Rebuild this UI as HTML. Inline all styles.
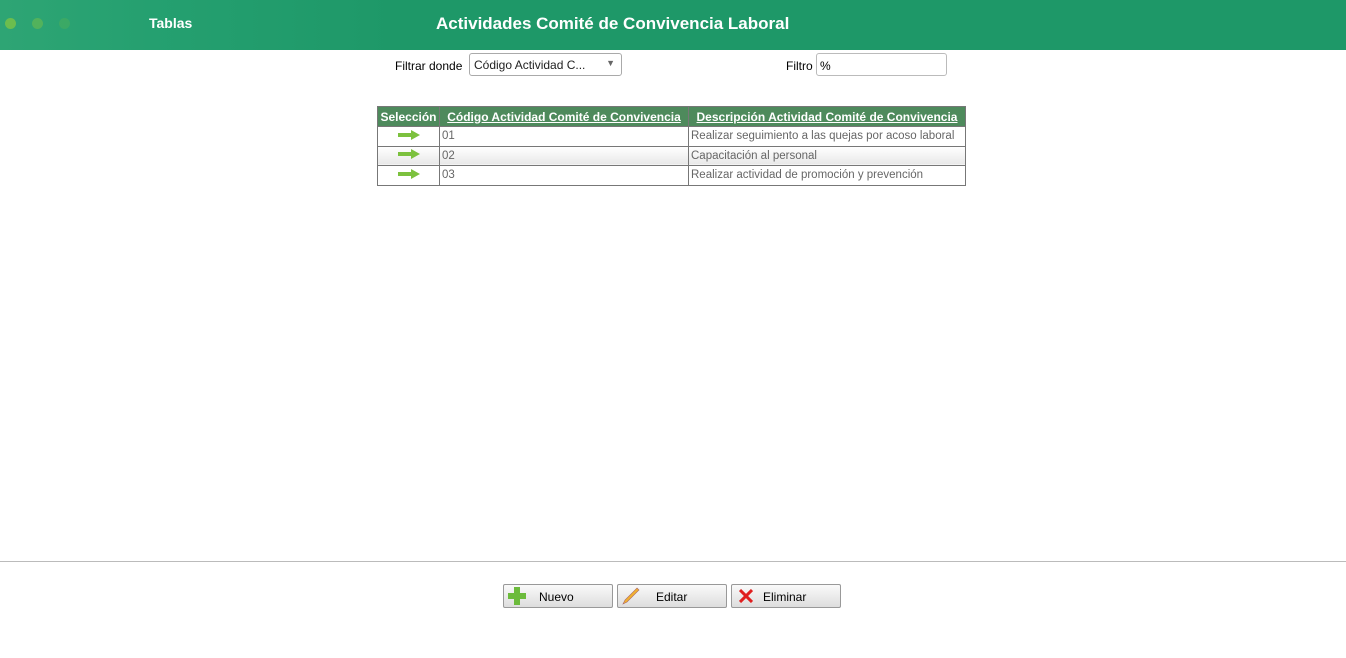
<!DOCTYPE html>
<html><head><meta charset="utf-8"><style>
body{margin:0;width:1346px;height:658px;background:#fff;font-family:"Liberation Sans",sans-serif;position:relative;overflow:hidden}
.hdr{position:absolute;left:0;top:0;width:1346px;height:50px;background:linear-gradient(90deg,#2ea574 0,#25a070 150px,#1e9868 400px,#1e9868 100%)}
.dot{position:absolute;top:18px;width:11px;height:11px;border-radius:50%}
.t1{position:absolute;left:149px;top:15px;color:#fff;font-weight:bold;font-size:14px}
.t2{position:absolute;left:436px;top:14px;color:#fff;font-weight:bold;font-size:17px}
.lbl{position:absolute;font-size:12px;color:#000}
.sel{position:absolute;left:469px;top:53px;width:153px;height:23px;border:1px solid #aaa;border-radius:3px;box-sizing:border-box;font-size:12px;padding:4px 4px;color:#222}
.inp{position:absolute;left:816px;top:53px;width:131px;height:23px;border:1px solid #bbb;border-radius:3px;box-sizing:border-box;font-size:12px;padding:5px 3px}
table{position:absolute;left:377px;top:106px;border-collapse:collapse;font-size:12px}
th{background:#4e8a5c;color:#fff;font-weight:bold;padding:1px 2px;border:1px solid #777;height:17px;white-space:nowrap}
th u{color:#fff}
td{border:1px solid #777;height:16.5px;padding:1px 2px;color:#666;white-space:nowrap;font-size:11.5px}
tr.g td{background:linear-gradient(#fff,#e8e8e8)}
.hr{position:absolute;left:0;top:561px;width:1346px;height:1px;background:#bbb}
.btn{position:absolute;top:584px;width:110px;height:24px;border:1px solid #999;border-radius:2px;box-sizing:border-box;background:linear-gradient(#fafafa,#ddd);font-size:12px}
.btn span{position:absolute;top:5px}
</style></head><body>
<div class="hdr">
<div class="dot" style="left:5px;background:#6cbd4e"></div>
<div class="dot" style="left:32px;background:#5cb556;opacity:.8"></div>
<div class="dot" style="left:59px;background:#48ad5e;opacity:.6"></div>
<div class="t1">Tablas</div>
<div class="t2">Actividades Comité de Convivencia Laboral</div>
</div>
<div class="lbl" style="left:395px;top:59px">Filtrar donde</div>
<div class="sel">Código Actividad C...<span style="position:absolute;right:6px;top:4px;color:#666;font-size:9px">▼</span></div>
<div class="lbl" style="left:786px;top:59px">Filtro</div>
<div class="inp">%</div>
<table>
<tr><th style="width:57px">Selección</th><th style="width:244px"><u>Código Actividad Comité de Convivencia</u></th><th style="width:272px"><u>Descripción Actividad Comité de Convivencia</u></th></tr>
<tr><td style="text-align:center"><svg width="22" height="10"><path d="M0 3h13V0l9 5-9 5V7H0z" fill="#7cc13e"/></svg></td><td>01</td><td style="max-width:272px;overflow:hidden">Realizar seguimiento a las quejas por acoso laboral</td></tr>
<tr class="g"><td style="text-align:center"><svg width="22" height="10"><path d="M0 3h13V0l9 5-9 5V7H0z" fill="#7cc13e"/></svg></td><td>02</td><td>Capacitación al personal</td></tr>
<tr><td style="text-align:center"><svg width="22" height="10"><path d="M0 3h13V0l9 5-9 5V7H0z" fill="#7cc13e"/></svg></td><td>03</td><td>Realizar actividad de promoción y prevención</td></tr>
</table>
<div class="hr"></div>
<div class="btn" style="left:503px"><svg style="position:absolute;left:4px;top:2px" width="18" height="18"><path d="M6 0h6v6h6v6h-6v6H6v-6H0V6h6z" fill="#6cbb3c"/></svg><span style="left:35px">Nuevo</span></div>
<div class="btn" style="left:617px"><svg style="position:absolute;left:4px;top:2px" width="18" height="18"><path d="M15 1l2 2L5 15l-4 2 2-4z" fill="#f0b030" stroke="#a66" stroke-width=".6"/></svg><span style="left:38px">Editar</span></div>
<div class="btn" style="left:731px"><svg style="position:absolute;left:7px;top:4px" width="14" height="14"><path d="M1 1l12 12M13 1L1 13" stroke="#e02020" stroke-width="3"/></svg><span style="left:31px">Eliminar</span></div>
</body></html>
